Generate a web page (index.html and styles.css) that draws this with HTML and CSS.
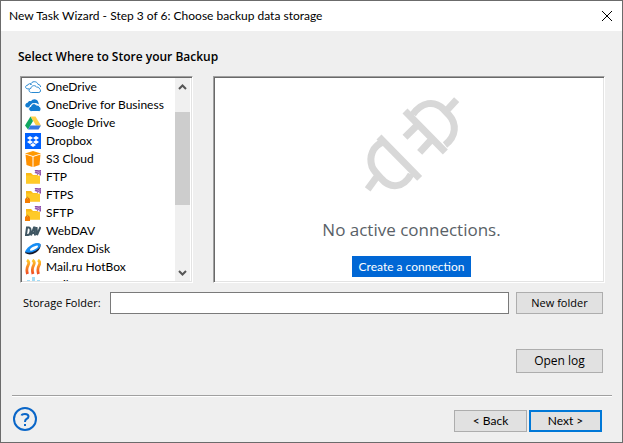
FILE: index.html
```html
<!DOCTYPE html>
<html lang="en">
<head>
<meta charset="utf-8">
<title>New Task Wizard</title>
<link rel="stylesheet" href="styles.css">
</head>
<body>
<svg class="defs" aria-hidden="true">
  <symbol id="cloud" viewBox="0 0 16 16">
    <path d="M5.4 5.8C6 3.7 7.6 2.7 9.3 2.7c1.8 0 3.2 1 3.8 2.7 1.600 .2 2.500 1.200 2.500 2.600M4.600 9.900H2.900C-.3 9.700 0 6.200 2.900 6.100 3.200 4.500 5.700 4.100 6.700 5.600"/>
    <path d="M6.300 13.500c-2.900-.2-2.900-3.800-.4-4.100C6.300 6.300 10.300 5.700 11.600 8.200c1.800-.4 2.700.5 2.900 1.700 1.700.6 1.300 3.500-.6 3.600z"/>
  </symbol>
  <symbol id="cloud-solid" viewBox="0 0 16 16">
    <path d="M4.500 10.500H2.500C-.8 10-.2 6 2.700 5.700 3.200 4 5 3.700 6 4.200 7.300 1.700 12 1.200 13.300 5.200L14 7.500 11 6 7 6.500 5 8.500z"/>
    <path stroke="#fff" d="M6.300 14.500c-3.400-.2-3.400-4.800-.4-5.100C6.300 6.300 10.300 5.700 11.600 8.200c2-.4 3 .5 3.100 1.700 2 .6 1.600 4.500-.8 4.600z"/>
  </symbol>
  <symbol id="folder" viewBox="0 0 16 16">
    <path fill="#fbb917" d="M1 4h5l2 2h7v8.500H1z"/>
    <path fill="#ffca28" d="M1 6.500h14v8H1z"/>
    <path fill="#fff" d="M9 1h7v5l-2 1-5-3z"/>
    <path fill="#8b4ba8" d="M9.500 1H16v5.500h-1.500L14 4.500 12.500 6 11.500 4.500 9.500 4l1-1.500z"/>
    <path fill="none" stroke="#ddc5e8" stroke-width=".6" d="M10.500 3l4-1.500M11.500 4.500l4-2M13.500 5.500l2-1.500"/>
  </symbol>
  <symbol id="lock" viewBox="0 0 16 16">
    <path fill="none" stroke="#b96a20" d="M1.500 12v-1q1-1.500 2 0V12"/>
    <path fill="#f57c00" d="M0 11.500h5V16H0z"/>
  </symbol>
</svg>
<main class="window">
  <header class="titlebar">
    <h1 class="title">New Task Wizard - Step 3 of 6: Choose backup data storage</h1>
    <button class="close" type="button" aria-label="Close"><svg viewBox="0 0 12 12" width="12" height="12"><path d="M1 1l10 10M11 1L1 11"/></svg></button>
  </header>

  <form class="content">
    <h2 class="heading">Select Where to Store your Backup</h2>
    <div class="panels">
      <section class="panel storages">
        <ul class="list">
          <li><svg class="outline"><use href="#cloud"/></svg>OneDrive</li>
          <li><svg class="solid"><use href="#cloud-solid"/></svg>OneDrive for Business</li>
          <li><svg viewBox="0 0 16 16"><path fill="#ffcf48" d="M5.500 1.500h5l5.500 9h-5z"/><path fill="#11a861" d="M5.500 1.500L8 6l-5 8.500-3-4z"/><path fill="#3777e3" d="M5.500 10.500H16l-2.500 4H3z"/></svg>Google Drive</li>
          <li><svg viewBox="0 0 16 16"><path fill="#0061fe" d="M0 0h16v16H0z"/><path fill="#fff" d="M5 3l3 2-3 2-3-2zM11 3l3 2-3 2-3-2zM5 7l3 2-3 2-3-2zM11 7l3 2-3 2-3-2zM8 10l3 2-3 2-3-2z"/></svg>Dropbox</li>
          <li><svg viewBox="0 0 16 16"><path fill="#ff9900" d="M0 2.500L8 0l8 2.500L8 5z"/><path fill="#ff9100" d="M.5 3.500L7.500 5.700V16L1.500 14zM15.500 3.500L8.500 5.700V16l6-2z"/></svg>S3 Cloud</li>
          <li><svg><use href="#folder"/></svg>FTP</li>
          <li><svg><use href="#folder"/><use href="#lock"/></svg>FTPS</li>
          <li><svg><use href="#folder"/><use href="#lock"/></svg>SFTP</li>
          <li><svg viewBox="0 0 16 16"><path class="dav" d="M2 4.500L1 12h2q2 0 2.500-3.500T4 4.500zM6 12.500l3-8h.5l.5 8M7 10h3M11.500 4l.5 8 3.500-8"/></svg>WebDAV</li>
          <li><svg viewBox="0 0 16 16"><path fill="#16182a" d="M0 12Q2 7 8 4q5-2.500 7.500-.5Q16 8 11 11.500 5 15 0 12z"/><path fill="#168ef5" d="M0 11Q2 6 8 3q5-2 7.500 0 1 3-4.500 6.500-6 3.500-11 1.500z"/><path fill="#fff" d="M5 9q0-2 4-3.500t4-.5q0 2-4 3.700T5 9z"/></svg>Yandex Disk</li>
          <li><svg viewBox="0 0 16 16"><defs><linearGradient id="heat" gradientUnits="userSpaceOnUse" x1="0" y1="1" x2="0" y2="15"><stop stop-color="#ffc928"/><stop offset="1" stop-color="#f04a23"/></linearGradient></defs><path fill="none" stroke="url(#heat)" stroke-width="2.800" d="M2 1q3 2 1 5.500T2.500 15M7.500 1q3 2 1 5.500T8 15M13 1q3 2 1 5.500T13.500 15"/></svg>Mail.ru HotBox</li>
          <li><svg viewBox="0 0 16 16"><path fill="#a4dcf5" d="M7 0h3v16H7zM2 3h3v12H2zM12 3h3v12h-3z"/></svg>Mail.ru IceBox</li>
        </ul>
        <div class="scrollbar" aria-hidden="true">
          <svg viewBox="0 0 15 17"><path d="M4 11l3.500-3.500L11 11"/></svg>
          <div class="track"><div class="thumb"></div></div>
          <svg viewBox="0 0 15 17"><path d="M4 7l3.500 3.500L11 7"/></svg>
        </div>
      </section>
      <section class="panel connections">
        <svg class="plug" viewBox="40 38 288 288" aria-hidden="true">
          <path d="M85 158l122 124M97 173C67 185 54 215 64 247Q69 259 92 283C118 313 157 313 181 270M78 278l-27 37M163 80l121 123M187 90C213 53 251 47 278 74L295 92C318 118 318 155 283 182M285 82l33-36M201 121l-38 38M244 164l-37 40"/>
        </svg>
        <p class="empty">No active connections.</p>
        <button class="create" type="button">Create a connection</button>
      </section>
    </div>
    <div class="folder-row">
      <label for="folder-path">Storage Folder:</label>
      <input id="folder-path" type="text">
      <button class="button" type="button">New folder</button>
    </div>
    <div class="log-row"><button class="button tall" type="button">Open log</button></div>
  </form>

  <footer class="footer">
    <button class="help" type="button" aria-label="Help"><svg viewBox="0 0 24 24" width="24" height="24"><circle cx="12" cy="12" r="11"/><path d="M8.500 8.500Q9 7 12 7q3.500 0 3.500 2.500 0 1.500-2 2.500-1.500.8-1.500 3M12 17v2"/></svg></button>
    <div class="nav">
      <button class="button" type="button">&lt; Back</button>
      <button class="button primary" type="submit">Next &gt;</button>
    </div>
  </footer>
</main>
</body>
</html>
```
FILE: styles.css
```css
* { box-sizing: border-box; }

body {
  margin: 0;
  font: 12px/18px "Open Sans", "Noto Sans", sans-serif;
  color: #000;
  background: #efefef;
}

button, input { font: inherit; color: inherit; }
button { padding: 0; border: 0; background: none; }
h1, h2, p, ul { margin: 0; padding: 0; }
.defs { position: absolute; width: 0; height: 0; }

.window {
  display: flex;
  flex-direction: column;
  min-height: 100vh;
  border: 1px solid #6b6b6b;
}

.titlebar {
  display: flex;
  align-items: center;
  justify-content: space-between;
  height: 30px;
  padding: 0 9px 0 8px;
  background: #fff;
}
.title, .list, .create, .nav { font-family: Lato, "Open Sans", sans-serif; }
.title { font-size: 12px; font-weight: 400; }
.close svg { display: block; fill: none; stroke: #000; }

.content { flex: 1; padding: 17px 17px 0 19px; }
.heading {
  margin: 0 0 10px -2px;
  font-size: 12px;
  font-weight: 600;
}

.panels {
  display: grid;
  grid-template-columns: 173px 1fr;
  gap: 20px;
  height: 207px;
}
.panel {
  overflow: hidden;
  border: 1px solid;
  border-color: #a0a0a0 #fff #fff #a0a0a0;
  background: #fff;
  box-shadow: inset 1px 1px #696969, inset -1px -1px #e3e3e3;
  padding: 1px;
}

.storages { display: flex; }
.list {
  flex: 1;
  overflow: hidden;
  padding-left: 3px;
  list-style: none;
}
.list li {
  display: flex;
  align-items: center;
  gap: 5px;
  height: 18px;
  white-space: nowrap;
}
.list svg { flex: none; width: 16px; height: 16px; }
.outline { fill: #fff; stroke: #2989d1; }
.solid { fill: #137cd0; }
.dav { fill: none; stroke: #3f5662; stroke-width: 2; }

.scrollbar {
  display: flex;
  flex-direction: column;
  width: 15px;
  margin-right: 1px;
  background: #f0f0f0;
}
.scrollbar svg {
  height: 17px;
  fill: none;
  stroke: #555;
  stroke-width: 2;
}
.track { flex: 1; padding-top: 17px; }
.thumb { height: 93px; background: #cdcdcd; }

.connections {
  display: flex;
  flex-direction: column;
  align-items: center;
  padding: 20px 0 0 5px;
}
.plug {
  flex: none;
  width: 96px;
  height: 96px;
  fill: none;
  stroke: #d8d8d8;
  stroke-width: 21;
}
.empty {
  margin: 25px 0 14px;
  font-size: 17px;
  line-height: 24px;
  color: #596167;
}
.create {
  flex: none;
  height: 21px;
  padding: 0 7px;
  color: #fff;
  background: #0067d5;
}

.folder-row {
  display: flex;
  align-items: center;
  gap: 7px;
  margin-top: 9px;
  padding: 0 2px 0 3px;
  font-size: 11px;
}
.folder-row label { padding-right: 2px; }
.folder-row input {
  flex: 1;
  min-width: 0;
  height: 22px;
  padding: 0 4px;
  border: 1px solid #7a7a7a;
  background: #fff;
}
.button {
  width: 87px;
  height: 22px;
  border: 1px solid #adadad;
  background: #e1e1e1;
}
.tall { height: 24px; }
.log-row {
  display: flex;
  justify-content: flex-end;
  margin-top: 35px;
  padding-right: 2px;
}

.footer {
  display: flex;
  justify-content: space-between;
  margin: 0 10px 0 11px;
  padding: 11px 10px 10px 1px;
  border-top: 1px solid #a0a0a0;
  box-shadow: inset 0 1px #fff;
}
.help { align-self: flex-start; }
.help svg {
  display: block;
  fill: none;
  stroke: #0a66c8;
  stroke-width: 2;
}
.nav { display: flex; gap: 2px; padding-top: 3px; }
.nav .button { width: 73px; }
.primary { border: 2px solid #0078d7; }
```
